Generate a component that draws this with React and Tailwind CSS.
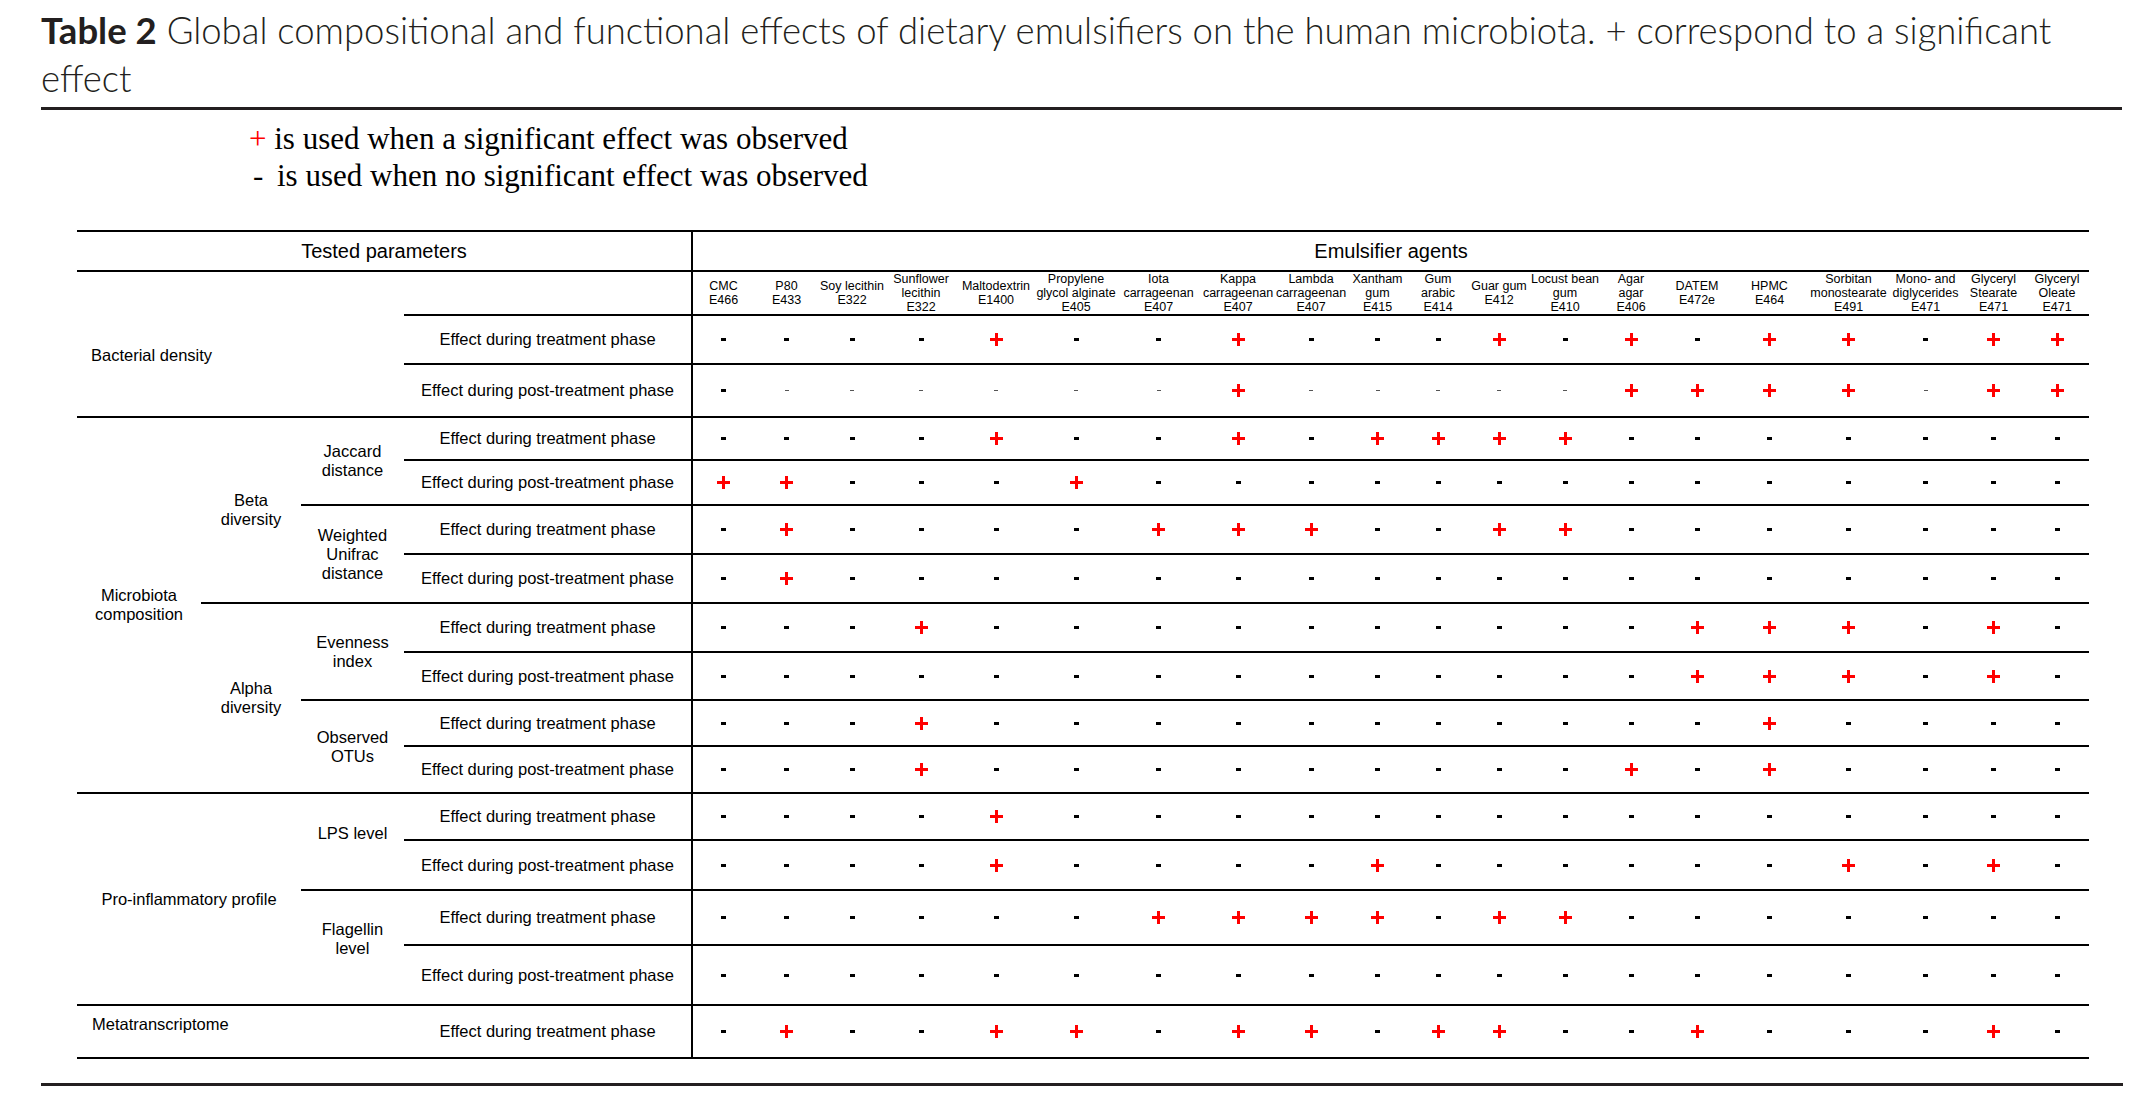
import React from 'react';

// column headers of the emulsifier agents (one entry per line)
const agents = [
  ['CMC', 'E466'],
  ['P80', 'E433'],
  ['Soy lecithin', 'E322'],
  ['Sunflower', 'lecithin', 'E322'],
  ['Maltodextrin', 'E1400'],
  ['Propylene', 'glycol alginate', 'E405'],
  ['Iota', 'carrageenan', 'E407'],
  ['Kappa', 'carrageenan', 'E407'],
  ['Lambda', 'carrageenan', 'E407'],
  ['Xantham', 'gum', 'E415'],
  ['Gum', 'arabic', 'E414'],
  ['Guar gum', 'E412'],
  ['Locust bean', 'gum', 'E410'],
  ['Agar', 'agar', 'E406'],
  ['DATEM', 'E472e'],
  ['HPMC', 'E464'],
  ['Sorbitan', 'monostearate', 'E491'],
  ['Mono- and', 'diglycerides', 'E471'],
  ['Glyceryl', 'Stearate', 'E471'],
  ['Glyceryl', 'Oleate', 'E471'],
];

// + significant, - not significant, . small dash
const results = [
  '----+--+---+-+-++-++',
  '-......+.....++++.++',
  '----+--+-++++-------',
  '++---+--------------',
  '-+----+++--++-------',
  '-+------------------',
  '---+----------+++-+-',
  '--------------+++-+-',
  '---+-----------+----',
  '---+---------+-+----',
  '----+---------------',
  '----+----+------+-+-',
  '------++++-++-------',
  '--------------------',
  '-+--++-++-++--+---+-',
];

const effectRows = [
  'row-[3]', 'row-[4]', 'row-[5]', 'row-[6]', 'row-[7]', 'row-[8]', 'row-[9]', 'row-[10]',
  'row-[11]', 'row-[12]', 'row-[13]', 'row-[14]', 'row-[15]', 'row-[16]', 'row-[17]',
];

function Cell({ className = '', children }) {
  return <div className={`border-t-2 border-black flex ${className}`}>{children}</div>;
}

function Mark({ v }) {
  if (v === '+') {
    return (
      <svg width="13" height="13" viewBox="0 0 13 13">
        <path d="M6.5 0v13M0 6.5h13" stroke="#ff0000" strokeWidth="3" />
      </svg>
    );
  }
  if (v === '.') return <span className="block w-[4px] h-[1.5px] bg-[#555]" />;
  return <span className="block w-[5px] h-[3px] bg-black" />;
}

export default function App() {
  return (
    <div className="w-[2134px] h-[1098px] bg-white text-black overflow-hidden">
      {/* Caption */}
      <p className="pl-[41px] pt-[6px] pr-[30px] font-['Lato',sans-serif] font-light text-[36.5px] leading-[48px] text-[#231f20]">
        <b className="font-bold">Table 2</b> Global compositional and functional effects of dietary emulsifiers on the human microbiota. + correspond to a significant effect
      </p>
      <div className="ml-[41px] mt-[5px] w-[2081px] h-[3px] bg-[#231f20]" />

      {/* Legend */}
      <div className="mt-[10px] pl-[249px] font-['Liberation_Serif',serif] text-[31px] leading-[37px]">
        <div>
          <span className="text-[#ff0000]">+</span> is used when a significant effect was observed
        </div>
        <div>
          <span className="inline-block w-[28px] pl-[4px]">-</span>is used when no significant effect was observed
        </div>
      </div>

      {/* Table */}
      <div className="mt-[36px] ml-[77px] w-[2012px] flex border-b-2 border-black font-['Liberation_Sans',Arial,sans-serif] text-[16.5px] leading-[19px]">
        <div className="w-[614px] grid grid-cols-[124px_100px_103px_287px] grid-rows-[40px_44px_49px_53px_43px_45px_49px_49px_49px_48px_46px_47px_47px_50px_55px_60px_53px]">
          <Cell className="col-[1/span_4] row-[1] items-center justify-center text-[20px]">Tested parameters</Cell>
          <Cell className="col-[1/span_3] row-[2/span_3] items-center pl-[14px] pt-[22px]">Bacterial density</Cell>
          <Cell className="col-[4] row-[2]" />
          {effectRows.map((r, i) => (
            <Cell key={r} className={`col-[4] ${r} items-center justify-center`}>
              {i % 2 === 0 ? 'Effect during treatment phase' : 'Effect during post-treatment phase'}
            </Cell>
          ))}
          <Cell className="col-[1] row-[5/span_8] items-center justify-center text-center">
            Microbiota<br />composition
          </Cell>
          <Cell className="col-[2] row-[5/span_4] items-center justify-center text-center">
            Beta<br />diversity
          </Cell>
          <Cell className="col-[3] row-[5/span_2] items-center justify-center text-center">
            Jaccard<br />distance
          </Cell>
          <Cell className="col-[3] row-[7/span_2] items-center justify-center text-center">
            Weighted<br />Unifrac<br />distance
          </Cell>
          <Cell className="col-[2] row-[9/span_4] items-center justify-center text-center">
            Alpha<br />diversity
          </Cell>
          <Cell className="col-[3] row-[9/span_2] items-center justify-center text-center">
            Evenness<br />index
          </Cell>
          <Cell className="col-[3] row-[11/span_2] items-center justify-center text-center">
            Observed<br />OTUs
          </Cell>
          <Cell className="col-[1/span_2] row-[13/span_4] items-center justify-center">Pro-inflammatory profile</Cell>
          <Cell className="col-[3] row-[13/span_2] items-center justify-center pb-[16px]">LPS level</Cell>
          <Cell className="col-[3] row-[15/span_2] items-center justify-center text-center pb-[18px]">
            Flagellin<br />level
          </Cell>
          <Cell className="col-[1/span_3] row-[17] items-start pl-[15px] pt-[9px]">Metatranscriptome</Cell>
        </div>

        <div className="w-[1398px] border-l-2 border-black grid grid-cols-[61px_65px_66px_72px_78px_82px_83px_76px_70px_63px_58px_64px_68px_64px_68px_77px_81px_73px_63px_64px] grid-rows-[40px_44px_49px_53px_43px_45px_49px_49px_49px_48px_46px_47px_47px_50px_55px_60px_53px]">
          <Cell className="col-span-20 items-center justify-center text-[20px]">Emulsifier agents</Cell>
          {agents.map((lines, i) => (
            <Cell key={i} className="items-center justify-center text-center text-[12.5px] leading-[14px] whitespace-nowrap">
              <div>
                {lines.map((l, j) => (
                  <div key={j}>{l}</div>
                ))}
              </div>
            </Cell>
          ))}
          {results.map((row, r) =>
            row.split('').map((v, c) => (
              <Cell key={`${r}-${c}`} className="items-center justify-center">
                <Mark v={v} />
              </Cell>
            ))
          )}
        </div>
      </div>

      <div className="ml-[41px] mt-[24px] w-[2082px] h-[3px] bg-[#231f20]" />
    </div>
  );
}
